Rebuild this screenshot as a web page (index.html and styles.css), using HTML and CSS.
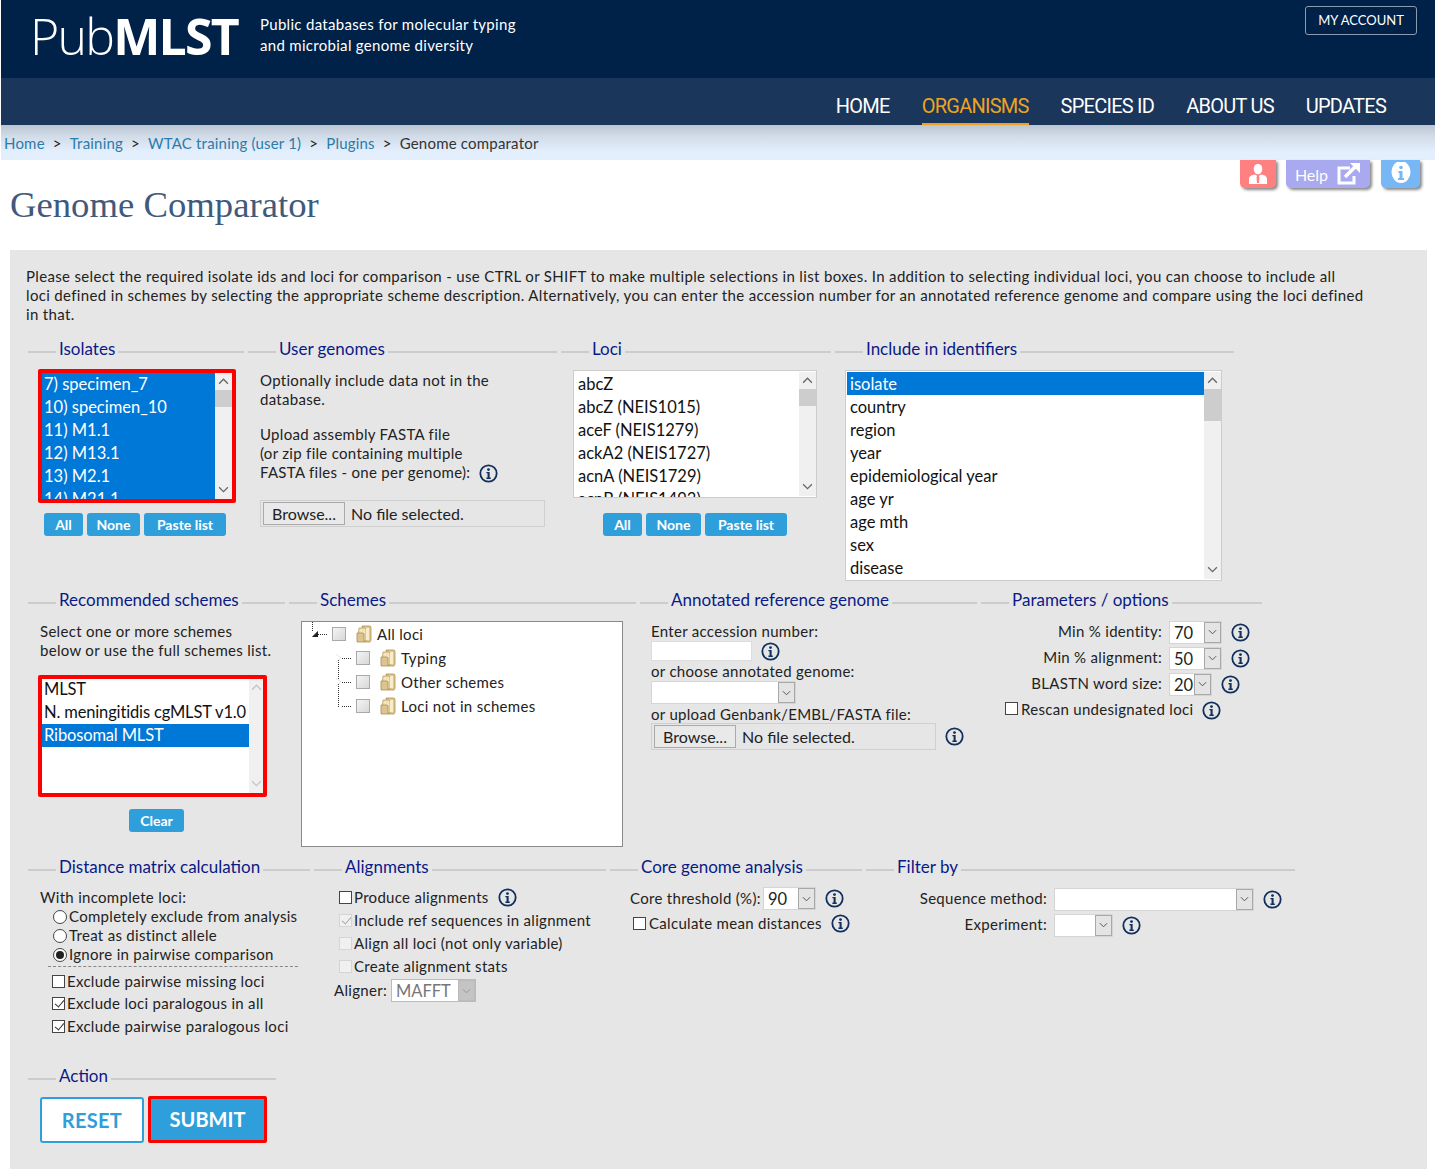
FILE: index.html
```html
<!DOCTYPE html>
<html lang="en">
<head>
<meta charset="utf-8">
<title>Genome Comparator - PubMLST</title>
<link rel="stylesheet" href="styles.css">
</head>
<body>
<svg class="defs" width="0" height="0" aria-hidden="true">
  <symbol id="info" viewBox="0 0 20 20">
    <circle cx="10" cy="10" r="8.6" fill="none" stroke="#12305c" stroke-width="1.9"/>
    <circle cx="10" cy="5.9" r="1.5" fill="#12305c"/>
    <path d="M7.8 8.4h3.4v5.9h1.2v1.4H7.8v-1.4H9V9.8H7.8z" fill="#12305c"/>
  </symbol>
  <symbol id="folder" viewBox="0 0 16 18">
    <path d="M6 1h8l1 1v13l-1 2H8z" fill="#e3c88a" stroke="#a98f55" stroke-width=".8"/>
    <path d="M3 3h6l1 1v12H2z" fill="#f4e3b8" stroke="#b59a5c" stroke-width=".8"/>
    <path d="M1 8h6l1 1v8H1z" fill="#dcc48e" stroke="#a98f55" stroke-width=".8"/>
    <path d="M10 3h3v12h-3z" fill="#f7eccd"/>
  </symbol>
  <symbol id="chev" viewBox="0 0 10 6">
    <path d="M1 1l4 4 4-4" fill="none" stroke="currentColor" stroke-width="1.100"/>
  </symbol>
  <symbol id="chevup" viewBox="0 0 10 6">
    <path d="M1 5l4-4 4 4" fill="none" stroke="currentColor" stroke-width="1.200"/>
  </symbol>
</svg>

<div class="page">
  <header class="topbar">
    <div class="logo"><span class="logo-light">Pub</span><span class="logo-bold">MLST</span></div>
    <p class="tagline">Public databases for molecular typing<br>and microbial genome diversity</p>
    <a class="account">MY ACCOUNT</a>
  </header>
  <nav class="mainnav">
    <a>HOME</a><a class="current">ORGANISMS</a><a>SPECIES ID</a><a>ABOUT US</a><a>UPDATES</a>
  </nav>
  <div class="crumbs">
    <a>Home</a><i>&gt;</i><a>Training</a><i>&gt;</i><a>WTAC training (user 1)</a><i>&gt;</i><a>Plugins</a><i>&gt;</i><span>Genome comparator</span>
  </div>

  <div class="floats">
    <a class="float float-user">
      <svg width="20" height="22" viewBox="0 0 20 22"><ellipse cx="10" cy="6" rx="4.300" ry="5.200" fill="#fff"/><path d="M1 21v-5c0-3 3-4 6-4.500l3 2 3-2c3 .5 6 1.500 6 4.500v5z" fill="#fff"/><path d="M9 13h2l.5 2-.5 5H9l-.5-5z" fill="#ff8080"/></svg>
    </a>
    <a class="float float-help">Help
      <svg width="26" height="24" viewBox="0 0 26 24"><path d="M15 6H4v15h15v-7" fill="none" stroke="#fff" stroke-width="3"/><path d="M10 15L21 4" stroke="#fff" stroke-width="3.500"/><path d="M15 1h10v10z" fill="#fff"/></svg>
    </a>
    <a class="float float-info">
      <svg width="20" height="24" viewBox="0 0 20 24"><ellipse cx="10" cy="10" rx="9.500" ry="11" fill="#fff"/><circle cx="10" cy="5.500" r="1.800" fill="#78b7f5"/><path d="M7.500 9h4v7h1.500v2H7v-2h1.500v-5h-1z" fill="#78b7f5"/></svg>
    </a>
  </div>

  <h1 class="title">Genome Comparator</h1>

  <main class="panel">
    <p class="intro">Please select the required isolate ids and loci for comparison - use CTRL or SHIFT to make multiple selections in list boxes. In addition to selecting individual loci, you can choose to include all<br>loci defined in schemes by selecting the appropriate scheme description. Alternatively, you can enter the accession number for an annotated reference genome and compare using the loci defined<br>in that.</p>

    <div class="row row-1">
      <section class="fs fs-isolates">
        <h2 class="legend">Isolates</h2>
        <div class="highlight hl-isolates">
          <div class="list selected">
            <ul class="opts"><li>7) specimen_7</li><li>10) specimen_10</li><li>11) M1.1</li><li>12) M13.1</li><li>13) M2.1</li><li>14) M21.1</li></ul>
            <div class="sb"><svg class="sb-up"><use href="#chevup"/></svg><b class="thumb"></b><svg class="sb-down"><use href="#chev"/></svg></div>
          </div>
        </div>
        <div class="btns btns-a"><a class="btn b-all">All</a><a class="btn b-none">None</a><a class="btn b-paste">Paste list</a></div>
      </section>

      <section class="fs fs-user">
        <h2 class="legend">User genomes</h2>
        <p class="txt user-a">Optionally include data not in the database.</p>
        <p class="txt user-b">Upload assembly FASTA file<br>(or zip file containing multiple<br>FASTA files - one per genome): <svg class="info inline"><use href="#info"/></svg></p>
        <div class="file file-user"><span class="browse">Browse...</span><span class="nofile">No file selected.</span></div>
      </section>

      <section class="fs fs-loci">
        <h2 class="legend">Loci</h2>
        <div class="list boxed list-loci">
          <ul class="opts"><li>abcZ</li><li>abcZ (NEIS1015)</li><li>aceF (NEIS1279)</li><li>ackA2 (NEIS1727)</li><li>acnA (NEIS1729)</li><li>acnB (NEIS1493)</li></ul>
          <div class="sb"><svg class="sb-up"><use href="#chevup"/></svg><b class="thumb"></b><svg class="sb-down"><use href="#chev"/></svg></div>
        </div>
        <div class="btns btns-b"><a class="btn b-all">All</a><a class="btn b-none">None</a><a class="btn b-paste">Paste list</a></div>
      </section>

      <section class="fs fs-ident">
        <h2 class="legend">Include in identifiers</h2>
        <div class="list boxed list-ident">
          <ul class="opts"><li class="sel">isolate</li><li>country</li><li>region</li><li>year</li><li>epidemiological year</li><li>age yr</li><li>age mth</li><li>sex</li><li>disease</li></ul>
          <div class="sb"><svg class="sb-up"><use href="#chevup"/></svg><b class="thumb thumb-tall"></b><svg class="sb-down"><use href="#chev"/></svg></div>
        </div>
      </section>
    </div>

    <div class="row row-2">
      <section class="fs fs-rec">
        <h2 class="legend">Recommended schemes</h2>
        <p class="txt rec-text">Select one or more schemes<br>below or use the full schemes list.</p>
        <div class="highlight hl-rec">
          <div class="list plain">
            <ul class="opts"><li>MLST</li><li>N. meningitidis cgMLST v1.0</li><li class="sel">Ribosomal MLST</li></ul>
            <div class="sb sb-off"><svg class="sb-up"><use href="#chevup"/></svg><svg class="sb-down"><use href="#chev"/></svg></div>
          </div>
        </div>
        <div class="btns btns-c"><a class="btn b-clear">Clear</a></div>
      </section>

      <section class="fs fs-schemes">
        <h2 class="legend">Schemes</h2>
        <div class="tree">
          <span class="tree-stub"></span>
          <span class="tree-spine"></span>
          <div class="node node-root"><span class="twist open"></span><span class="dots"></span><span class="cb"></span><svg class="folder"><use href="#folder"/></svg><span>All loci</span></div>
          <div class="node"><span class="twist"></span><span class="dots"></span><span class="cb"></span><svg class="folder"><use href="#folder"/></svg><span>Typing</span></div>
          <div class="node"><span class="twist"></span><span class="dots"></span><span class="cb"></span><svg class="folder"><use href="#folder"/></svg><span>Other schemes</span></div>
          <div class="node"><span class="twist none"></span><span class="dots"></span><span class="cb"></span><svg class="folder"><use href="#folder"/></svg><span>Loci not in schemes</span></div>
        </div>
      </section>

      <section class="fs fs-annot">
        <h2 class="legend">Annotated reference genome</h2>
        <div class="annot">
          <p class="txt">Enter accession number:</p>
          <div class="inl"><span class="textbox"></span><svg class="info"><use href="#info"/></svg></div>
          <p class="txt annot-l2">or choose annotated genome:</p>
          <div class="dd dd-annot"><span class="dd-val"></span><span class="dd-arrow"><svg><use href="#chev"/></svg></span></div>
          <p class="txt annot-l3">or upload Genbank/EMBL/FASTA file:</p>
          <div class="inl"><div class="file file-annot"><span class="browse">Browse...</span><span class="nofile">No file selected.</span></div><svg class="info"><use href="#info"/></svg></div>
        </div>
      </section>

      <section class="fs fs-params">
        <h2 class="legend">Parameters / options</h2>
        <div class="form">
          <div class="frow"><label>Min % identity:</label><div class="dd dd-53"><span class="dd-val">70</span><span class="dd-arrow"><svg><use href="#chev"/></svg></span></div><svg class="info"><use href="#info"/></svg></div>
          <div class="frow"><label>Min % alignment:</label><div class="dd dd-53"><span class="dd-val">50</span><span class="dd-arrow"><svg><use href="#chev"/></svg></span></div><svg class="info"><use href="#info"/></svg></div>
          <div class="frow"><label>BLASTN word size:</label><div class="dd dd-43"><span class="dd-val">20</span><span class="dd-arrow"><svg><use href="#chev"/></svg></span></div><svg class="info"><use href="#info"/></svg></div>
          <div class="frow rescan"><input type="checkbox" class="ck"><span>Rescan undesignated loci</span><svg class="info"><use href="#info"/></svg></div>
        </div>
      </section>
    </div>

    <div class="row row-3">
      <section class="fs fs-dist">
        <h2 class="legend">Distance matrix calculation</h2>
        <p class="txt dist-head">With incomplete loci:</p>
        <div class="radios">
          <div class="opt"><input type="radio" class="rd" name="inc"><span>Completely exclude from analysis</span></div>
          <div class="opt"><input type="radio" class="rd" name="inc"><span>Treat as distinct allele</span></div>
          <div class="opt"><input type="radio" class="rd" name="inc" checked><span>Ignore in pairwise comparison</span></div>
        </div>
        <div class="checks">
          <div class="opt"><input type="checkbox" class="ck"><span>Exclude pairwise missing loci</span></div>
          <div class="opt"><input type="checkbox" class="ck" checked><span>Exclude loci paralogous in all</span></div>
          <div class="opt"><input type="checkbox" class="ck" checked><span>Exclude pairwise paralogous loci</span></div>
        </div>
      </section>

      <section class="fs fs-align">
        <h2 class="legend">Alignments</h2>
        <div class="align-list">
          <div class="opt"><input type="checkbox" class="ck"><span>Produce alignments</span><svg class="info"><use href="#info"/></svg></div>
          <div class="opt"><input type="checkbox" class="ck off" checked disabled><span>Include ref sequences in alignment</span></div>
          <div class="opt"><input type="checkbox" class="ck off" disabled><span>Align all loci (not only variable)</span></div>
          <div class="opt"><input type="checkbox" class="ck off" disabled><span>Create alignment stats</span></div>
        </div>
        <div class="aligner"><label>Aligner:</label><div class="dd dd-maf disabled"><span class="dd-val">MAFFT</span><span class="dd-arrow"><svg><use href="#chev"/></svg></span></div></div>
      </section>

      <section class="fs fs-core">
        <h2 class="legend">Core genome analysis</h2>
        <div class="core-row"><label>Core threshold (%):</label><div class="dd dd-53"><span class="dd-val">90</span><span class="dd-arrow"><svg><use href="#chev"/></svg></span></div><svg class="info"><use href="#info"/></svg></div>
        <div class="opt core-check"><input type="checkbox" class="ck"><span>Calculate mean distances</span><svg class="info"><use href="#info"/></svg></div>
      </section>

      <section class="fs fs-filter">
        <h2 class="legend">Filter by</h2>
        <div class="form">
          <div class="frow"><label>Sequence method:</label><div class="dd dd-seq"><span class="dd-val"></span><span class="dd-arrow"><svg><use href="#chev"/></svg></span></div><svg class="info"><use href="#info"/></svg></div>
          <div class="frow"><label>Experiment:</label><div class="dd dd-exp"><span class="dd-val"></span><span class="dd-arrow"><svg><use href="#chev"/></svg></span></div><svg class="info"><use href="#info"/></svg></div>
        </div>
      </section>
    </div>

    <div class="row">
      <section class="fs fs-action">
        <h2 class="legend">Action</h2>
        <div class="actions"><a class="reset">RESET</a><a class="submit">SUBMIT</a></div>
      </section>
    </div>
  </main>
</div>
</body>
</html>
```

FILE: styles.css
```css
* { box-sizing: border-box; }
html, body { margin: 0; padding: 0; background: #fff; }
body { font-family: "Lato", "Open Sans", sans-serif; font-size: 15px; line-height: 19px; letter-spacing: .3px; color: #222; height: 1172px; overflow: hidden; }
p, h1, h2, ul { margin: 0; padding: 0; }
ul { list-style: none; }
a { text-decoration: none; cursor: pointer; }
.defs { position: absolute; }

.page { position: relative; margin-left: 1px; width: 1434px; }

/* header */
.topbar { height: 78px; background: #002148; display: flex; align-items: flex-start; color: #fff; }
.logo { margin: 9px 0 0 29px; width: 230px; font-family: "Open Sans", sans-serif; font-size: 50px; line-height: 55px; letter-spacing: -1.800px; white-space: nowrap; }
.logo-light { font-weight: 300; }
.logo-bold { font-weight: 700; }
.tagline { margin-top: 14px; line-height: 21px; font-size: 15px; letter-spacing: .3px; white-space: nowrap; flex: 1; }
.account { margin: 6px 18px 0 0; width: 112px; height: 29px; border: 1px solid #8c9bb0; border-radius: 3px; color: #fff; font-size: 13px; letter-spacing: 0; line-height: 27px; text-align: center; }
.mainnav { height: 47px; background: #1a365a; display: flex; justify-content: flex-end; gap: 32px; padding-right: 49px; }
.mainnav a { color: #fff; font-family: "Roboto", sans-serif; font-size: 20px; letter-spacing: -.75px; line-height: 56px; height: 47px; white-space: nowrap; }
.mainnav a.current { color: #eda321; border-bottom: 2px solid #eda321; }
.crumbs { height: 35px; background: linear-gradient(#bcc6d2 0, #d2dde9 12px, #e3effd 27px); padding-left: 3px; display: flex; align-items: center; line-height: 38px; font-size: 15px; letter-spacing: .2px; }
.crumbs a { color: #2b7bab; }
.crumbs i { font-style: normal; margin: 0 8px; color: #222; }
.crumbs span { color: #333; }

.floats { position: absolute; top: 160px; left: 1239px; display: flex; }
.float { height: 28px; border-radius: 0 0 5px 5px; box-shadow: 2px 2px 3px #888; display: flex; align-items: center; justify-content: center; color: #fff; }
.float-user { width: 36px; background: #ff8080; }
.float-help { width: 84px; margin-left: 10px; background: #a9a9f0; font-size: 16px; gap: 7px; letter-spacing: 0; }
.float-info { width: 39px; margin-left: 11px; background: #78b7f5; }

.title { margin-left: 9px; height: 90px; padding-top: 24px; font-family: "Liberation Serif", serif; font-weight: 400; font-size: 36.700px; letter-spacing: 0; line-height: 42px; color: #3f5a7c; }

/* panel */
.panel { margin-left: 9px; width: 1417px; height: 919px; background: #e6e6e6; padding-top: 17px; }
.intro { margin-left: 16px; width: 1345px; letter-spacing: .34px; }
.row { display: flex; gap: 4px; margin-left: 18px; }
.row-1 { height: 251px; margin-top: 14px; }
.row-2 { height: 267px; }
.row-3 { height: 209px; }
.fs { flex: none; }
.fs-isolates { width: 216px; } .fs-user { width: 309px; } .fs-loci { width: 270px; } .fs-ident { width: 399px; }
.fs-rec { width: 257px; } .fs-schemes { width: 347px; } .fs-annot { width: 337px; } .fs-params { width: 281px; }
.fs-dist { width: 282px; } .fs-align { width: 292px; } .fs-core { width: 252px; } .fs-filter { width: 429px; }
.fs-action { width: 248px; }

.legend { display: flex; align-items: center; gap: 3px; height: 20px; font-weight: 400; font-size: 17px; letter-spacing: 0; color: #0a1a86; white-space: nowrap; }
.legend::before, .legend::after { content: ""; height: 2px; background: #ccc; margin-top: 8px; }
.legend::before { width: 28px; }
.legend::after { flex: 1; }

/* lists */
.highlight { border: 4px solid #f00; border-radius: 2px; background: #fff; margin-left: 10px; }
.hl-isolates { margin-top: 11px; width: 198px; height: 134px; }
.hl-rec { margin-top: 15px; width: 229px; height: 122px; }
.hl-rec .opts { margin-top: -1px; }
.hl-rec .opts li { letter-spacing: -.15px; }
.hl-rec .sb { width: 14px; background: #f0f0f0; }
.hl-rec .sb svg { left: 2px; }
.list { display: flex; height: 100%; background: #fff; overflow: hidden; font-size: 16.500px; letter-spacing: 0; line-height: 23px; color: #111; }
.opts { flex: 1; min-width: 0; }
.opts li { height: 23px; padding-left: 2px; white-space: nowrap; }
.opts li.sel { background: #0078d7; color: #fff; }
.list.selected .opts { background: #0078d7; color: #fff; }
.boxed { border: 1px solid #ccc; padding: 1px 0 1px 1px; }
.boxed .opts li { padding-left: 3px; line-height: 25px; }
.list-loci { margin: 12px 0 0 12px; width: 244px; height: 128px; }
.list-ident { margin: 12px 0 0 10px; width: 377px; height: 211px; }
.sb { flex: none; width: 17px; background: #f0f0f0; position: relative; }
.sb svg { position: absolute; left: 3px; width: 11px; height: 7px; color: #666; }
.sb-up { top: 5px; }
.sb-down { bottom: 6px; }
.thumb { position: absolute; top: 17px; left: 0; width: 17px; height: 17px; background: #cdcdcd; }
.thumb-tall { height: 32px; }
.sb-off svg { color: #c4c4c4; }

.btns { display: flex; gap: 4px; }
.btns-a { margin: 10px 0 0 16px; }
.btns-b { margin: 15px 0 0 42px; }
.btns-c { margin: 12px 0 0 101px; }
.btn { height: 23px; border-radius: 3px; background: #2f9fdc; color: #fff; font-size: 14px; font-weight: 700; letter-spacing: 0; line-height: 24px; text-align: center; }
.b-all { width: 39px; } .b-none { width: 53px; } .b-paste { width: 82px; } .b-clear { width: 55px; }
.btns-b .b-none { width: 55px; }

/* text & files */
.txt { white-space: normal; }
.user-a { margin: 13px 0 0 12px; width: 270px; }
.user-b { margin: 16px 0 0 12px; }
.info { width: 19px; height: 19px; flex: none; }
.info.inline { vertical-align: -5px; margin-left: 4px; }
.file { display: flex; align-items: center; height: 27px; border: 1px solid #d0d0d0; padding-left: 2px; font-size: 16px; letter-spacing: 0; flex: none; }
.browse { height: 23px; background: #e9e9e9; border: 1px solid #aaa; line-height: 21px; text-align: center; width: 82px; }
.nofile { margin-left: 6px; }
.file-user { margin: 17px 0 0 12px; width: 285px; }
.file-annot { width: 285px; }

.rec-text { margin: 13px 0 0 12px; }

/* tree */
.tree { position: relative; margin: 12px 0 0 12px; width: 322px; height: 226px; background: #fff; border: 1px solid #8a8a8a; }
.tree-stub { position: absolute; left: 10px; top: 0; height: 9px; border-left: 1px dotted #333; }
.tree-spine { position: absolute; left: 36px; top: 36px; height: 49px; border-left: 1px dotted #333; }
.node { display: flex; align-items: center; height: 24px; padding-left: 34px; }
.node-root { padding-left: 10px; }
.twist { width: 0; height: 0; border-top: 4px solid transparent; border-bottom: 4px solid transparent; border-left: 5px solid #fff; filter: drop-shadow(0 0 .6px #888); flex: none; }
.twist.open { border-top: 0; border-bottom: 6px solid #222; border-left: 6px solid transparent; }
.twist.none { border: 0; width: 5px; }
.dots { width: 9px; border-top: 1px dotted #333; margin: 0 5px 0 1px; flex: none; }
.node-root .dots { margin-left: 0; }
.cb { width: 14px; height: 14px; border: 1px solid #aaa; background: linear-gradient(135deg, #f4f4f4, #d8d8d8); flex: none; }
.folder { width: 16px; height: 18px; margin: 0 5px 0 10px; flex: none; }

/* annotated */
.annot { margin: 13px 0 0 11px; display: flex; flex-direction: column; align-items: flex-start; }
.inl { display: flex; align-items: center; gap: 9px; }
.textbox { display: block; width: 101px; height: 20px; background: #fff; border: 1px solid #ddd; }
.annot-l2 { margin-top: 1px; }
.annot-l3 { margin: 1px 0 -1px; }

/* dropdowns */
.dd { display: flex; height: 23px; border: 1px solid #d5d5d5; background: #fff; font-size: 16.500px; letter-spacing: 0; line-height: 23px; flex: none; }
.dd-val { flex: 1; padding-left: 4px; overflow: hidden; }
.dd-arrow { flex: none; width: 17px; background: #e4e4e4; border: 1px solid #a8a8a8; display: flex; align-items: center; justify-content: center; color: #555; }
.dd-arrow svg { width: 9px; height: 6px; }
.dd-annot { width: 145px; }
.dd-53 { width: 53px; }
.dd-43 { width: 43px; }
.dd-seq { width: 200px; }
.dd-exp { width: 59px; }
.dd-maf { width: 85px; }
.disabled { color: #777; border-color: #bbb; }
.disabled .dd-arrow { background: #c4c4c4; border-color: #bbb; color: #999; }

/* forms */
.form { padding-top: 10px; }
.frow { display: flex; align-items: center; height: 26px; }
.frow label { width: 181px; text-align: right; margin: 0 7px 2px 0; flex: none; }
.frow .info { margin-left: 9px; }
.rescan { padding-left: 24px; }
.rescan .ck { margin-right: 3px; margin-bottom: 3px; }
.rescan span { margin-bottom: 2px; }
.rescan .info { margin-left: 9px; }
.ck, .rd { appearance: none; -webkit-appearance: none; margin: 0; flex: none; width: 13px; height: 13px; background: #fff; border: 1px solid #444; position: relative; }
.rd { width: 14px; height: 14px; border-radius: 50%; }
.rd:checked::after { content: ""; position: absolute; left: 2px; top: 2px; width: 8px; height: 8px; border-radius: 50%; background: #222; }
.ck:checked::after { content: ""; position: absolute; left: 3.500px; top: 0; width: 4px; height: 8px; border: solid #333; border-width: 0 1.300px 1.300px 0; transform: rotate(40deg); }
.ck.off { background: #f0f0f0; border-color: #d5d5d5; }
.ck.off:checked::after { border-color: #aaa; }
.opt { display: flex; align-items: center; white-space: nowrap; }
.opt .ck, .opt .rd { margin-right: 2px; }

/* distance */
.dist-head { margin: 12px 0 0 12px; }
.radios { margin: 0 0 0 25px; }
.radios .opt { height: 19px; }
.checks { margin: 2px 0 0 24px; position: relative; padding-top: 4px; }
.checks::before { content: ""; position: absolute; top: 0; left: -4px; width: 250px; border-top: 1px dashed #888; }
.checks .opt { height: 22.500px; }

/* alignments */
.align-list { margin: 10px 0 0 25px; }
.align-list .opt { height: 23px; }
.align-list .info { margin-left: 9px; }
.aligner { display: flex; align-items: center; gap: 4px; margin: 1px 0 0 20px; }

/* core */
.core-row { display: flex; align-items: center; margin: 11px 0 0 20px; }
.core-row label { width: 133px; flex: none; }
.core-row .info { margin-left: 9px; }
.core-check { margin: 0 0 0 23px; height: 26px; }
.core-check .ck { margin-right: 3px; }
.core-check .info { margin-left: 9px; }

/* action */
.actions { display: flex; align-items: center; gap: 4px; margin: 11px 0 0 12px; }
.reset, .submit { display: block; font-size: 20px; font-weight: 700; text-align: center; }
.reset { width: 104px; height: 46px; line-height: 42px; letter-spacing: .3px; background: #fff; border: 2px solid #2f9fdc; border-radius: 3px; color: #2f9fdc; }
.submit { width: 119px; height: 47px; line-height: 41px; letter-spacing: 0; background: #2f9fdc; border: 3px solid #f00; border-radius: 2px; color: #fff; }
```
